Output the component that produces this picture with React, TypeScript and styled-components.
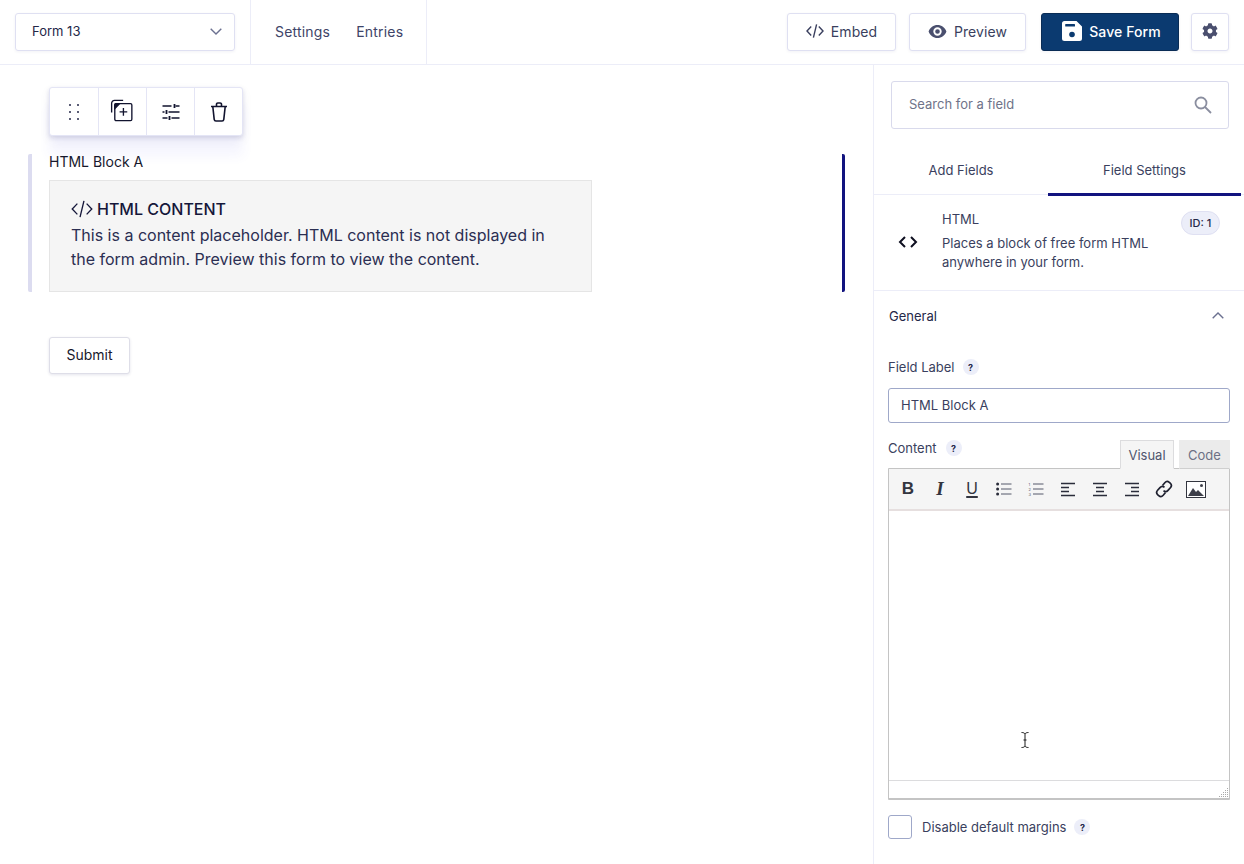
import { ReactNode } from "react";
import styled, { createGlobalStyle } from "styled-components";
import { FaCog } from "react-icons/fa";

const GlobalStyle = createGlobalStyle`
  html, body {
    margin: 0;
    padding: 0;
    background: #fff;
    font-family: Inter, "Liberation Sans", sans-serif;
    color: #242748;
  }
  * { box-sizing: border-box; }
`;

const CodeIcon = ({ size = 18, weight = 1.4 }: { size?: number; weight?: number }) => (
  <svg width={size} height={size} viewBox="0 0 18 18" fill="none" stroke="currentColor" strokeWidth={weight}>
    <path d="M5.2 4.6 1 9l4.2 4.4M12.8 4.6 17 9l-4.2 4.4M10.6 2.4 7.4 15.6" />
  </svg>
);

const DragIcon = () => (
  <svg width="12" height="18" viewBox="0 0 12 18" fill="#242748">
    {[2, 9, 16].map((y) => (
      <g key={y}>
        <circle cx="2" cy={y} r="1" />
        <circle cx="10" cy={y} r="1" />
      </g>
    ))}
  </svg>
);

const DuplicateSvg = styled.svg`
  margin: 0 3px 2px 0;
`;

const DuplicateIcon = () => (
  <DuplicateSvg width="23" height="23" viewBox="0 0 24 24" fill="none" stroke="#11132e" strokeWidth="1.4">
    <path d="M1.700 14V4.500a3 3 0 0 1 3-3h9" />
    <path d="M5 6.200a1.400 1.400 0 0 1 1.400-1.400h15a1.400 1.400 0 0 1 1.400 1.400v15a1.400 1.400 0 0 1-1.400 1.400h-15A1.400 1.400 0 0 1 5 21.200Z" />
    <path d="M5 10V6.200a1.400 1.400 0 0 1 1.400-1.400H10Z" fill="#11132e" />
    <path d="M14 9.500v8M10 13.500h8" />
  </DuplicateSvg>
);

const SlidersIcon = () => (
  <svg width="20" height="20" viewBox="0 0 20 20" fill="none" stroke="#11132e" strokeWidth="1.400">
    <path d="M1.500 4h9M14.500 4h4M1.500 10h2M7.500 10h11M1.500 16h5M10.500 16h8" />
    <path d="M13.500 2v4M5.500 8v4M8.500 14v4" strokeWidth="1.800" />
  </svg>
);

const TrashIcon = () => (
  <svg width="18" height="20" viewBox="0 0 18 20" fill="none" stroke="#11132e" strokeWidth="1.600">
    <path d="M1 4.500h16M6.500 4.200V2.300A1.300 1.300 0 0 1 7.800 1h2.400a1.300 1.300 0 0 1 1.300 1.300v1.900" />
    <path d="m2.800 4.500 1.400 12.900a1.800 1.800 0 0 0 1.800 1.600h6a1.800 1.800 0 0 0 1.800-1.600l1.400-12.900" />
  </svg>
);

const ChevronDown = () => (
  <svg width="12" height="7" viewBox="0 0 12 7" fill="none" stroke="#6b7090" strokeWidth="1.400">
    <path d="m.7.700 5.300 5.300L11.300.700" />
  </svg>
);

const ChevronUp = () => (
  <svg width="12" height="7" viewBox="0 0 12 7" fill="none" stroke="#6b7090" strokeWidth="1.400">
    <path d="M.7 6.300 6 1l5.300 5.300" />
  </svg>
);

const EyeIcon = () => (
  <svg width="19" height="13" viewBox="0 0 20 14" fill="#4a4f6e">
    <path fillRule="evenodd" d="M10 0c4.400 0 8 2.800 9.600 7C18 11.200 14.400 14 10 14S2 11.200.4 7C2 2.800 5.600 0 10 0Zm0 2.500a4.500 4.500 0 1 0 0 9 4.500 4.500 0 0 0 0-9Zm0 2a2.500 2.500 0 1 1 0 5 2.500 2.500 0 0 1 0-5Z" />
  </svg>
);

const SaveIcon = () => (
  <svg width="20" height="20" viewBox="0 0 20 20">
    <path d="M2.500 0h12L20 5.500v12a2.500 2.500 0 0 1-2.500 2.500h-15A2.500 2.500 0 0 1 0 17.500v-15A2.500 2.500 0 0 1 2.500 0Z" fill="#fff" />
    <rect x="3.200" y="3" width="9.800" height="2.600" rx=".6" fill="#0b3a70" />
    <circle cx="10" cy="13.500" r="2.800" fill="#0b3a70" />
  </svg>
);

const SearchIcon = () => (
  <svg width="18" height="18" viewBox="0 0 18 18" fill="none" stroke="#8a8e9f" strokeWidth="1.800">
    <circle cx="7" cy="7" r="5.500" />
    <path d="m11 11 6 6" />
  </svg>
);

const ListIcon = ({ ordered }: { ordered?: boolean }) => (
  <svg width="16" height="14" viewBox="0 0 16 14" fill="none" stroke="#55586a" strokeWidth="1">
    <path d="M5 2h10.500M5 7h10.500M5 12h10.500" />
    {ordered ? (
      <g fill="#55586a" fontFamily="Inter, sans-serif" fontSize="4" stroke="none">
        <text x="0.500" y="3.500">1</text>
        <text x="0.500" y="8.500">2</text>
        <text x="0.500" y="13.500">3</text>
      </g>
    ) : (
      <g fill="#2a2c3a" stroke="none">
        <circle cx="1.600" cy="2" r="1.500" />
        <circle cx="1.600" cy="7" r="1.500" />
        <circle cx="1.600" cy="12" r="1.500" />
      </g>
    )}
  </svg>
);

const AlignIcon = ({ variant }: { variant: "left" | "center" | "right" }) => {
  const short = { left: "M1 5.500h8M1 9.500h8", center: "M4 5.500h8M4 9.500h8", right: "M7 5.500h8M7 9.500h8" }[variant];
  return (
    <svg width="16" height="15" viewBox="0 0 16 15" fill="none" stroke="#2a2c3a" strokeWidth="1.500">
      <path d="M1 1.500h14M1 13.500h14" />
      <path d={short} />
    </svg>
  );
};

const LinkIcon = () => (
  <svg width="18" height="18" viewBox="0 0 18 18" fill="none" stroke="#1f2130" strokeWidth="1.700">
    <path d="m7.500 5.500 2.300-2.800a3.200 3.200 0 0 1 4.500-.3l.9.800a3.200 3.200 0 0 1 .2 4.500l-2.400 2.700a3.200 3.200 0 0 1-4.500.2" />
    <path d="m10.500 12.500-2.300 2.800a3.200 3.200 0 0 1-4.500.3l-.9-.8a3.200 3.200 0 0 1-.2-4.500L5 7.600a3.200 3.200 0 0 1 4.500-.2" />
  </svg>
);

const ImageIcon = () => (
  <svg width="20" height="17" viewBox="0 0 20 17">
    <rect x=".5" y=".5" width="19" height="16" fill="#fff" stroke="#33353f" />
    <path d="M2 15 7 7l3 4 2-2 6 6Z" fill="#3d3f49" />
    <circle cx="15.500" cy="4.500" r="1.500" fill="#3d3f49" />
  </svg>
);

const ResizeGrip = () => (
  <svg width="11" height="11" viewBox="0 0 11 11" fill="#a9a9a9">
    {[
      [9, 1], [7, 3], [9, 3], [5, 5], [7, 5], [9, 5], [3, 7], [5, 7], [7, 7], [9, 7],
      [1, 9], [3, 9], [5, 9], [7, 9], [9, 9],
    ].map(([x, y]) => (
      <rect key={`${x}-${y}`} x={x} y={y} width="1" height="1" />
    ))}
  </svg>
);

const TextCursor = () => (
  <svg width="8" height="16" viewBox="0 0 8 16" fill="none" stroke="#1b1b1b" strokeWidth="1">
    <path d="M.5.500c2 0 3 .5 3.500 1.500C4.500 1 5.500.500 7.500.500M4 2v12M.5 15.500c2 0 3-.5 3.500-1.500.5 1 1.500 1.500 3.500 1.500M2.500 8h3" />
  </svg>
);

const Page = styled.div`
  width: 1244px;
  height: 864px;
  overflow: hidden;
  display: flex;
  flex-direction: column;
`;

const Header = styled.header`
  height: 65px;
  flex: none;
  display: flex;
  align-items: center;
  border-bottom: 1px solid #ecedf8;
`;

const FormSelect = styled.div`
  width: 220px;
  height: 38px;
  margin: 0 15px;
  padding: 0 12px 2px 16px;
  display: flex;
  align-items: center;
  justify-content: space-between;
  border: 1px solid #dfe0f2;
  border-radius: 3px;
  box-shadow: 0 1px 3px rgba(40, 40, 110, 0.06);
  font-size: 13px;
  color: #242748;
  svg { margin-top: 1px; }
`;

const HeaderNav = styled.nav`
  align-self: stretch;
  width: 177px;
  padding: 0 0 2px 24px;
  display: flex;
  align-items: center;
  gap: 26px;
  border-left: 1px solid #ecedf8;
  border-right: 1px solid #ecedf8;
  font-size: 14px;
  color: #3e4468;
  letter-spacing: 0.2px;
`;

const HeaderActions = styled.div`
  margin-left: auto;
  padding-right: 15px;
  display: flex;
  align-items: center;
`;

const ActionButton = styled.button<{ $width: number; $gap: number; $primary?: boolean }>`
  width: ${(p) => p.$width}px;
  height: 38px;
  margin-left: ${(p) => p.$gap}px;
  padding: 0 0 2px ${(p) => (p.$primary ? 3 : 0)}px;
  display: flex;
  align-items: center;
  justify-content: center;
  gap: 7px;
  border: 1px solid ${(p) => (p.$primary ? "#0a2c55" : "#dfe0f2")};
  border-radius: 3px;
  background: ${(p) => (p.$primary ? "#0b3a70" : "#fff")};
  color: ${(p) => (p.$primary ? "#fff" : "#3a3f5e")};
  box-shadow: 0 1px 3px rgba(40, 40, 110, 0.06);
  font-family: inherit;
  font-size: 14px;
  font-weight: ${(p) => (p.$primary ? 500 : 400)};
  letter-spacing: 0.1px;
`;

const Body = styled.div`
  flex: 1;
  min-height: 0;
  display: flex;
`;

const Canvas = styled.main`
  width: 873px;
  flex: none;
  padding: 22px 28px 0;
`;

const FieldToolbar = styled.div`
  width: 194px;
  height: 49px;
  margin-left: 21px;
  display: grid;
  grid-template-columns: 48px 48px 48px 1fr;
  background: #fff;
  border: 1px solid #e4e5f5;
  border-radius: 3px;
  box-shadow: 0 2px 4px rgba(40, 40, 110, 0.14), 0 4px 12px rgba(40, 40, 110, 0.06), 0 20px 12px rgba(90, 90, 230, 0.06);
`;

const ToolButton = styled.div`
  display: flex;
  align-items: center;
  justify-content: center;
  & + & {
    border-left: 1px solid #e4e5f5;
  }
`;

const FieldRow = styled.div`
  height: 138px;
  margin-top: 18px;
  padding-left: 17px;
  border-left: 4px solid #dcdcf0;
  border-right: 3px solid #12137f;
  border-radius: 2px;
`;

const FieldLabel = styled.div`
  height: 26px;
  font-size: 14px;
  line-height: 16px;
  color: #17182c;
`;

const Placeholder = styled.div`
  width: 543px;
  height: 112px;
  padding: 16px 21px;
  background: #f5f5f5;
  border: 1px solid #e5e5e5;
  color: #2b2e52;
  font-size: 16px;
  line-height: 24px;
`;

const PlaceholderTitle = styled.div`
  height: 24px;
  margin-bottom: 2px;
  display: flex;
  align-items: center;
  gap: 4px;
  font-size: 16px;
  font-weight: 500;
  color: #15173a;
  svg { flex: none; }
`;

const SubmitButton = styled.button`
  display: block;
  width: 81px;
  height: 37px;
  margin: 45px 0 0 21px;
  padding: 0 0 2px;
  background: #fff;
  border: 1px solid #dedee8;
  border-radius: 3px;
  box-shadow: 0 1px 3px rgba(40, 40, 110, 0.12);
  font-family: inherit;
  font-size: 14px;
  color: #17182c;
`;

const Sidebar = styled.aside`
  flex: 1;
  border-left: 1px solid #ecedf8;
`;

const SearchBox = styled.div`
  height: 48px;
  margin: 16px 15px 0 17px;
  padding: 0 16px 2px 17px;
  display: flex;
  align-items: center;
  justify-content: space-between;
  border: 1px solid #d9daec;
  border-radius: 3px;
  font-size: 13px;
  color: #6f7389;
  svg { margin-top: 2px; }
`;

const Tabs = styled.div`
  height: 66px;
  display: flex;
  border-bottom: 1px solid #ecedf8;
`;

const Tab = styled.div<{ $active?: boolean; $width: number }>`
  width: ${(p) => p.$width}px;
  height: ${(p) => (p.$active ? 67 : 65)}px;
  padding-top: 17px;
  display: flex;
  align-items: center;
  justify-content: center;
  border-bottom: ${(p) => (p.$active ? "3px solid #12137f" : "none")};
  font-size: 13px;
  color: #3a3f5e;
`;

const FieldInfo = styled.div`
  height: 96px;
  padding: 16px 0 0 24px;
  display: flex;
  border-bottom: 1px solid #ecedf8;
`;

const InfoIcon = styled.div`
  width: 44px;
  flex: none;
  padding-top: 22px;
  color: #0e0f20;
`;

const InfoText = styled.div`
  width: 238px;
  flex: none;
  font-size: 13px;
  line-height: 19px;
  color: #3a3f5e;
`;

const InfoTitle = styled.div`
  margin-bottom: 7px;
  line-height: 16px;
`;

const IdBadge = styled.div`
  width: 39px;
  height: 24px;
  margin: 0 0 0 1px;
  display: flex;
  align-items: center;
  justify-content: center;
  background: #eceef9;
  border: 1px solid #dfe0f2;
  border-radius: 12px;
  font-size: 11px;
  font-weight: 500;
  color: #242748;
`;

const SectionHead = styled.div`
  height: 50px;
  padding: 0 20px 1px 15px;
  display: flex;
  align-items: center;
  justify-content: space-between;
  font-size: 13px;
  color: #242748;
`;

const SettingLabel = styled.div<{ $gap?: number }>`
  display: flex;
  align-items: center;
  gap: ${(p) => p.$gap ?? 8}px;
  font-size: 13px;
  color: #3a3f5e;
`;

const HelpDot = styled.span`
  width: 16px;
  height: 16px;
  display: inline-flex;
  align-items: center;
  justify-content: center;
  border-radius: 50%;
  background: #eceef9;
  font-size: 9px;
  font-weight: 700;
  color: #242748;
`;

const LabelSetting = styled.div`
  padding: 18px 14px 0 14px;
`;

const TextInput = styled.div`
  height: 35px;
  margin-top: 13px;
  padding: 0 0 2px 12px;
  display: flex;
  align-items: center;
  border: 1px solid #9fa8c9;
  border-radius: 3px;
  font-size: 13px;
  color: #3a3f5e;
`;

const ContentHead = styled.div`
  height: 29px;
  margin: 17px 14px 0;
  display: flex;
  align-items: flex-start;
  justify-content: space-between;
`;

const EditorTabs = styled.div`
  display: flex;
  gap: 5px;
  position: relative;
  z-index: 1;
`;

const EditorTab = styled.div<{ $active?: boolean; $width: number }>`
  width: ${(p) => p.$width}px;
  height: 29px;
  display: flex;
  align-items: center;
  justify-content: center;
  background: ${(p) => (p.$active ? "#f5f5f5" : "#ebebeb")};
  border: 1px solid ${(p) => (p.$active ? "#dcdcde" : "#ebebeb")};
  border-bottom: ${(p) => (p.$active ? "1px solid #f5f5f5" : "1px solid #cfcfcf")};
  font-size: 13px;
  color: ${(p) => (p.$active ? "#50556e" : "#6c7085")};
`;

const Editor = styled.div`
  height: 332px;
  margin: -1px 14px 0;
  display: flex;
  flex-direction: column;
  position: relative;
  border: 1px solid #c4c4c4;
  border-bottom-width: 2px;
  border-radius: 1px;
`;

const EditorToolbar = styled.div`
  height: 42px;
  flex: none;
  padding: 0 6px 0 3px;
  display: flex;
  align-items: center;
  background: #f5f5f5;
  border-bottom: 2px solid #e6dfdf;
`;

const EditorTool = styled.div`
  width: 32px;
  height: 32px;
  flex: none;
  display: flex;
  align-items: center;
  justify-content: center;
  font-family: "Liberation Sans", sans-serif;
  color: #33353f;
`;

const BoldMark = styled.span`
  font-size: 17px;
  font-weight: 700;
`;

const ItalicMark = styled.span`
  font-family: "Liberation Serif", serif;
  font-size: 19px;
  font-style: italic;
  font-weight: 700;
`;

const UnderlineMark = styled.span`
  font-size: 16px;
  text-decoration: underline;
  text-decoration-thickness: 1.5px;
  text-underline-offset: 2px;
`;

const EditorArea = styled.div`
  flex: 1;
`;

const EditorStatus = styled.div`
  height: 18px;
  flex: none;
  display: flex;
  align-items: flex-end;
  justify-content: flex-end;
  border-top: 1px solid #dcdcde;
`;

const CursorMark = styled.div`
  position: absolute;
  left: 132px;
  top: 263px;
  line-height: 0;
`;

const CheckRow = styled.div`
  margin: 15px 14px 0;
  display: flex;
  align-items: center;
  gap: 10px;
`;

const CheckBox = styled.div`
  width: 24px;
  height: 24px;
  flex: none;
  border: 1px solid #9fa8c9;
  border-radius: 3px;
`;

const toolIcons: ReactNode[] = [
  <DragIcon key="drag" />,
  <DuplicateIcon key="dup" />,
  <SlidersIcon key="sliders" />,
  <TrashIcon key="trash" />,
];

const App = () => {
  return (
    <Page>
      <GlobalStyle />
      <Header>
        <FormSelect>
          Form 13
          <ChevronDown />
        </FormSelect>
        <HeaderNav>
          <span>Settings</span>
          <span>Entries</span>
        </HeaderNav>
        <HeaderActions>
          <ActionButton $width={109} $gap={0}>
            <CodeIcon />
            Embed
          </ActionButton>
          <ActionButton $width={117} $gap={13}>
            <EyeIcon />
            Preview
          </ActionButton>
          <ActionButton $width={138} $gap={15} $primary>
            <SaveIcon />
            Save Form
          </ActionButton>
          <ActionButton $width={38} $gap={12}>
            <FaCog size={16} color="#4a4f6e" />
          </ActionButton>
        </HeaderActions>
      </Header>
      <Body>
        <Canvas>
          <FieldToolbar>
            {toolIcons.map((icon, i) => (
              <ToolButton key={i}>{icon}</ToolButton>
            ))}
          </FieldToolbar>
          <FieldRow>
            <FieldLabel>HTML Block A</FieldLabel>
            <Placeholder>
              <PlaceholderTitle>
                <CodeIcon size={22} weight={1.1} />
                HTML CONTENT
              </PlaceholderTitle>
              This is a content placeholder. HTML content is not displayed in the form admin. Preview this form to view
              the content.
            </Placeholder>
          </FieldRow>
          <SubmitButton>Submit</SubmitButton>
        </Canvas>
        <Sidebar>
          <SearchBox>
            Search for a field
            <SearchIcon />
          </SearchBox>
          <Tabs>
            <Tab $width={174}>Add Fields</Tab>
            <Tab $width={193} $active>
              Field Settings
            </Tab>
          </Tabs>
          <FieldInfo>
            <InfoIcon>
              <svg width="20" height="14" viewBox="0 0 20 14" fill="none" stroke="currentColor" strokeWidth="2">
                <path d="M7 2 2 7l5 5M13 2l5 5-5 5" />
              </svg>
            </InfoIcon>
            <InfoText>
              <InfoTitle>HTML</InfoTitle>
              Places a block of free form HTML anywhere in your form.
            </InfoText>
            <IdBadge>ID: 1</IdBadge>
          </FieldInfo>
          <SectionHead>
            General
            <ChevronUp />
          </SectionHead>
          <LabelSetting>
            <SettingLabel>
              Field Label <HelpDot>?</HelpDot>
            </SettingLabel>
            <TextInput>HTML Block A</TextInput>
          </LabelSetting>
          <ContentHead>
            <SettingLabel $gap={9}>
              Content <HelpDot>?</HelpDot>
            </SettingLabel>
            <EditorTabs>
              <EditorTab $active $width={54}>
                Visual
              </EditorTab>
              <EditorTab $width={51}>Code</EditorTab>
            </EditorTabs>
          </ContentHead>
          <Editor>
            <EditorToolbar>
              <EditorTool>
                <BoldMark>B</BoldMark>
              </EditorTool>
              <EditorTool>
                <ItalicMark>I</ItalicMark>
              </EditorTool>
              <EditorTool>
                <UnderlineMark>U</UnderlineMark>
              </EditorTool>
              <EditorTool>
                <ListIcon />
              </EditorTool>
              <EditorTool>
                <ListIcon ordered />
              </EditorTool>
              <EditorTool>
                <AlignIcon variant="left" />
              </EditorTool>
              <EditorTool>
                <AlignIcon variant="center" />
              </EditorTool>
              <EditorTool>
                <AlignIcon variant="right" />
              </EditorTool>
              <EditorTool>
                <LinkIcon />
              </EditorTool>
              <EditorTool>
                <ImageIcon />
              </EditorTool>
            </EditorToolbar>
            <EditorArea />
            <EditorStatus>
              <ResizeGrip />
            </EditorStatus>
            <CursorMark>
              <TextCursor />
            </CursorMark>
          </Editor>
          <CheckRow>
            <CheckBox />
            <SettingLabel>
              Disable default margins <HelpDot>?</HelpDot>
            </SettingLabel>
          </CheckRow>
        </Sidebar>
      </Body>
    </Page>
  );
};

export default App;
